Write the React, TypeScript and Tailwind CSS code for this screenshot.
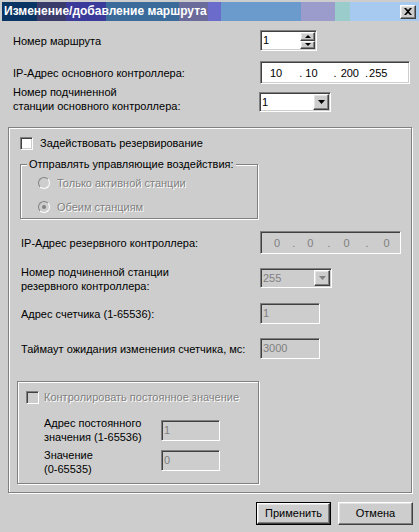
import React from "react";

// классические 3D-рамки Windows
const sunken =
  "border border-t-[#808080] border-l-[#808080] border-b-white border-r-white shadow-[inset_1px_1px_0_#404040,inset_-1px_-1px_0_#cdcdcd]";
const raised =
  "border border-t-white border-l-white border-b-[#404040] border-r-[#404040] shadow-[inset_-1px_-1px_0_#808080,inset_1px_1px_0_#e4e4e4] bg-[#cdcdcd]";
const etched = "border border-[#808080] shadow-[1px_1px_0_#fff,inset_1px_1px_0_#fff]";
const disText = "text-[#808080] [text-shadow:1px_1px_0_#fff]";

function Arrow({ up = false, disabled = false }: { up?: boolean; disabled?: boolean }) {
  const fill = disabled ? "#808080" : "#000";
  const pts = up ? "0,3 3,0 6,3" : "0,0 7,0 3.5,4";
  return (
    <svg width={up ? 6 : 7} height={up ? 3 : 4} viewBox={up ? "0 0 6 3" : "0 0 7 4"} className="block">
      <polygon points={pts} fill={fill} />
    </svg>
  );
}

function Select({ value, disabled = false }: { value: string; disabled?: boolean }) {
  return (
    <div className={`${sunken} w-[72px] h-[20px] flex ${disabled ? "bg-[#cdcdcd]" : "bg-white"}`}>
      <div className={`flex-1 pl-[2px] leading-[18px] ${disabled ? "text-[#808080]" : ""}`}>{value}</div>
      <div className="p-[1px] flex">
        <div className={`${raised} w-[16px] h-full flex items-center justify-center`}>
          <Arrow disabled={disabled} />
        </div>
      </div>
    </div>
  );
}

function Field({ value, w = "w-[59px]" }: { value: string; w?: string }) {
  return (
    <div className={`${sunken} ${w} h-[21px] bg-[#cdcdcd] pl-[2px] leading-[19px] text-[#808080]`}>{value}</div>
  );
}

function Check({ disabled = false }: { disabled?: boolean }) {
  return <div className={`${sunken} w-[13px] h-[13px] shrink-0 ${disabled ? "bg-[#cdcdcd]" : "bg-white"}`} />;
}

function Radio({ checked = false }: { checked?: boolean }) {
  return (
    <div className="w-[12px] h-[12px] rounded-full border border-t-[#808080] border-l-[#808080] border-b-white border-r-white bg-[#cdcdcd] flex items-center justify-center shrink-0">
      {checked && <div className="w-[4px] h-[4px] rounded-full bg-[#808080]" />}
    </div>
  );
}

export default function App() {
  return (
    <div className="w-[419px] h-[532px] bg-[#cdcdcd] flex flex-col [font-family:'Liberation_Sans',Arial,sans-serif] text-[11px] leading-[14px] text-black overflow-hidden">
      {/* заголовок окна */}
      <div className="ml-[2px] mt-[2px] h-[19px] flex items-center justify-between pl-[2px] pr-[3px] bg-[linear-gradient(90deg,#0a3464_35px,#3a3a6b_35px,#3a3a6b_64px,#3a3a9b_64px,#3a3a9b_104px,#3a6b9b_104px,#3a6b9b_177px,#6b6b9b_177px,#6b6b9b_206px,#6b6bcc_206px,#6b6bcc_219px,#6b9bcc_219px,#6b9bcc_299px,#9b9bcc_299px,#9b9bcc_333px,#9bcccc_333px,#9bcccc_348px,#a6caf0_348px)]">
        <span className="text-white font-bold text-[12px] leading-[19px]">Изменение/добавление маршрута</span>
        <div className={`${raised} w-[16px] h-[14px] flex items-center justify-center`}>
          <svg width="8" height="7" viewBox="0 0 8 7">
            <path d="M0 0h2l2 2 2-2h2L5 3.5 8 7H6L4 5 2 7H0l3-3.5z" fill="#000" />
          </svg>
        </div>
      </div>

      <div className="flex flex-col pl-[13px]">
        <div className="mt-[9px] h-[21px] flex items-center">
          <div className="w-[247px]">Номер маршрута</div>
          <div className={`${sunken} w-[57px] h-[21px] bg-white flex`}>
            <div className="flex-1 pl-[2px] leading-[19px]">1</div>
            <div className="flex flex-col py-[1px] pr-[1px] gap-0">
              <div className={`${raised} w-[15px] h-[9px] flex items-center justify-center`}>
                <Arrow up />
              </div>
              <div className={`${raised} w-[15px] h-[9px] flex items-center justify-center`}>
                <svg width="6" height="3" viewBox="0 0 6 3" className="block">
                  <polygon points="0,0 6,0 3,3" fill="#000" />
                </svg>
              </div>
            </div>
          </div>
        </div>

        <div className="mt-[10px] h-[23px] flex items-center">
          <div className="w-[247px]">IP-Адрес основного контроллера:</div>
          <div className={`${sunken} w-[150px] h-[23px] bg-white flex items-center pl-[9px]`}>
            <span>10</span>
            <span className="ml-[17px]">.</span>
            <span className="ml-[3px]">10</span>
            <span className="ml-[16px]">.</span>
            <span className="ml-[4px]">200</span>
            <span className="ml-[6px]">.</span>
            <span className="ml-[1px]">255</span>
          </div>
        </div>

        <div className="mt-[1px] flex items-end">
          <div className="w-[246px]">
            Номер подчиненной
            <br />
            станции основного контроллера:
          </div>
          <div className="mb-[1px]">
            <Select value="1" />
          </div>
        </div>
      </div>

      {/* основная группа */}
      <div className={`${etched} mt-[14px] ml-[8px] w-[404px] h-[366px] flex flex-col`}>
        <div className="mt-[8px] ml-[11px] flex items-center">
          <Check />
          <span className="ml-[7px]">Задействовать резервирование</span>
        </div>

        <div className={`${etched} relative mt-[14px] ml-[11px] w-[238px] h-[55px] flex flex-col`}>
          <span className="absolute left-[6px] -top-[8px] px-[2px] bg-[#cdcdcd]">Отправлять управляющие воздействия:</span>
          <div className="mt-[11px] ml-[17px] flex items-center">
            <Radio />
            <span className={`ml-[7px] ${disText}`}>Только активной станции</span>
          </div>
          <div className="mt-[10px] ml-[17px] flex items-center">
            <Radio checked />
            <span className={`ml-[7px] ${disText}`}>Обеим станциям</span>
          </div>
        </div>

        <div className="mt-[12px] pl-[12px] h-[23px] flex items-center">
          <div className="w-[239px]">IP-Адрес резервного контроллера:</div>
          <div className={`${sunken} w-[141px] h-[23px] bg-[#cdcdcd] flex items-center pl-[13px] text-[#808080]`}>
            <span>0</span>
            <span className="ml-[12px]">.</span>
            <span className="ml-[12px]">0</span>
            <span className="ml-[14px]">.</span>
            <span className="ml-[13px]">0</span>
            <span className="ml-[16px]">.</span>
            <span className="ml-[15px]">0</span>
          </div>
        </div>

        <div className="mt-[11px] pl-[12px] flex items-start">
          <div className="w-[239px]">
            Номер подчиненной станции
            <br />
            резервного контроллера:
          </div>
          <div className="mt-[3px]">
            <Select value="255" disabled />
          </div>
        </div>

        <div className="mt-[9px] pl-[12px] h-[22px] flex items-center">
          <div className="w-[239px] pt-[2px]">Адрес счетчика (1-65536):</div>
          <Field value="1" w="w-[60px]" />
        </div>

        <div className="mt-[13px] pl-[12px] h-[22px] flex items-center">
          <div className="w-[239px] pt-[1px]">Таймаут ожидания изменения счетчика, мс:</div>
          <Field value="3000" w="w-[60px]" />
        </div>

        <div className={`${etched} mt-[22px] ml-[8px] w-[242px] h-[103px] flex flex-col`}>
          <div className="mt-[8px] ml-[8px] flex items-center">
            <Check disabled />
            <span className={`ml-[5px] ${disText}`}>Контролировать постоянное значение</span>
          </div>
          <div className="mt-[12px] ml-[26px] flex items-start">
            <div className="w-[117px]">
              Адрес постоянного
              <br />
              значения (1-65536)
            </div>
            <div className="mt-[4px]">
              <Field value="1" />
            </div>
          </div>
          <div className="mt-[4px] ml-[26px] flex items-start">
            <div className="w-[117px]">
              Значение
              <br />
              (0-65535)
            </div>
            <div className="mt-[2px]">
              <Field value="0" />
            </div>
          </div>
        </div>
      </div>

      {/* кнопки */}
      <div className="mt-[9px] flex justify-end gap-[7px] pr-[6px]">
        <div className="border border-black">
          <button className={`${raised} w-[73px] h-[21px] leading-[19px] text-center`}>Применить</button>
        </div>
        <button className={`${raised} w-[75px] h-[23px] leading-[21px] text-center`}>Отмена</button>
      </div>
    </div>
  );
}
